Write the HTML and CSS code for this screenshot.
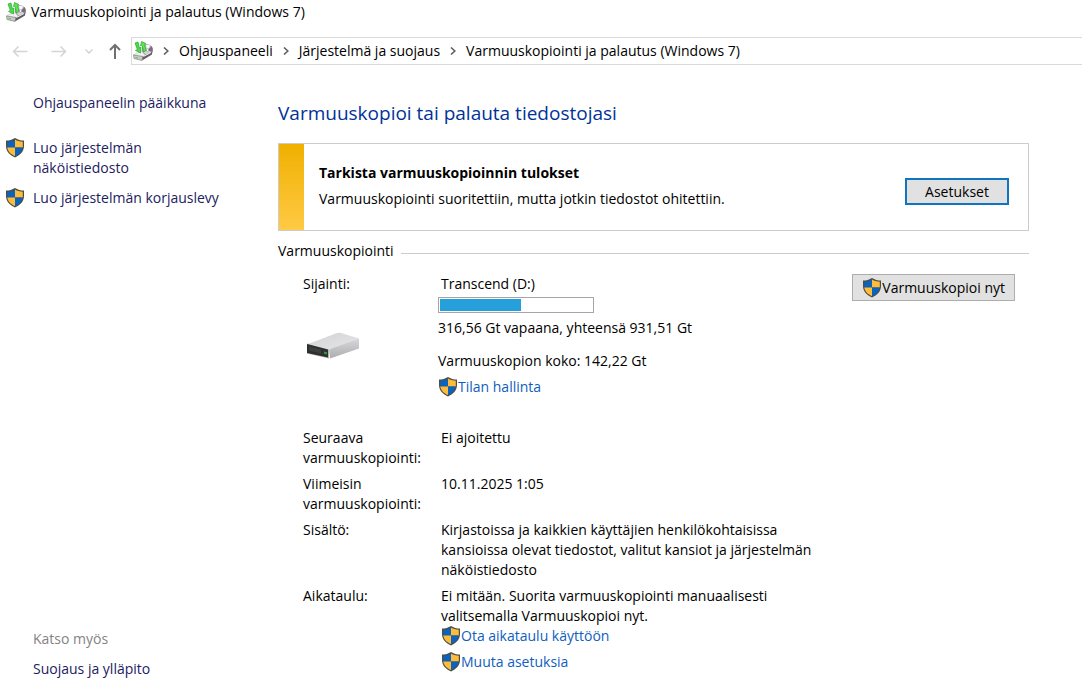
FILE: index.html
```html
<!DOCTYPE html>
<html lang="fi">

<head>
  <meta charset="UTF-8">
  <meta name="viewport" content="width=device-width, initial-scale=1.0">
  <title>Varmuuskopiointi ja palautus (Windows 7)</title>
  <link rel="stylesheet" href="styles.css">
</head>

<body>
  <!-- shared icons -->
  <svg class="defs" aria-hidden="true">
    <symbol id="shield" viewBox="0 0 20 20">
      <path d="M10 0C7.400 1.700 4.300 2.600 1 2.600V8C1 13.500 5 17.300 10 19.400C15 17.300 19 13.500 19 8V2.600C15.700 2.600 12.600 1.700 10 0Z" fill="#504c43" />
      <path d="M10 1.500V9.500H2.200V3.700C5.300 3.500 7.800 2.900 10 1.500Z" fill="#0b63bd" />
      <path d="M10 1.500V9.500H17.800V3.700C14.700 3.500 12.200 2.900 10 1.500Z" fill="#fdbd3b" />
      <path d="M10 9.500V18.100C6 16.300 2.800 13.600 2.300 9.500Z" fill="#fdbd3b" />
      <path d="M10 9.500V18.100C14 16.300 17.200 13.600 17.700 9.500Z" fill="#0b63bd" />
    </symbol>
    <symbol id="backup" viewBox="0 0 20 20">
      <path d="M.5 14L8 10L19 11L12 17Z" fill="#f0f0f0" stroke="#aaa" stroke-width=".5" />
      <ellipse cx="14.500" cy="9" rx="5" ry="5.500" transform="rotate(-25 14.500 9)" fill="#d5d0d8" stroke="#8d8790" stroke-width=".8" />
      <path d="M14.500 9L18.600 5Q20.500 8 18.500 11Z" fill="#806a83" />
      <path d="M14.500 9L13 4Q15.500 3 17 4.300Z" fill="#fafafa" />
      <circle cx="14.500" cy="9" r="1.300" fill="#fff" stroke="#777" stroke-width=".5" />
      <path d="M.5 14L10 15.500L9 19.500L1 17.500Z" fill="#c9c9c9" stroke="#777" stroke-width=".6" />
      <path d="M10 15.500L19 10.800V13.500L9 19.500Z" fill="#5f5f5f" />
      <path d="M10.500 15.500L18 11.500" stroke="#eee" stroke-width="1" />
      <path d="M2 2L5 1L6.500 7L8 6L7.500 12L2.500 9.500L4.300 8.500Z" fill="#49dc45" stroke="#1c9a22" stroke-width=".6" />
      <path d="M7.500 4.500L8.500 .5L13 2.500L11.700 3.500L13 9.500L10.500 11L9.200 4.800Z" fill="#5ae650" stroke="#1c9a22" stroke-width=".6" />
      <path d="M2.500 16.500L5 17" stroke="#45d82d" stroke-width="1" />
    </symbol>
    <symbol id="chevron" viewBox="0 0 6 8">
      <path d="M1 .5L4.800 4L1 7.500" fill="none" stroke="#606060" stroke-width="1.600" />
    </symbol>
  </svg>

  <header>
    <div class="titlebar">
      <svg class="app-icon"><use href="#backup" /></svg>
      <span>Varmuuskopiointi ja palautus (Windows 7)</span>
    </div>
    <div class="toolbar">
      <div class="nav-buttons">
        <button class="nav-button" aria-label="Takaisin" disabled>
          <svg width="16" height="14" viewBox="0 0 16 14"><path d="M15.500 7.500H1.500M6.500 2.500L1.500 7.500L6.500 12.500" /></svg>
        </button>
        <button class="nav-button" aria-label="Eteenpäin" disabled>
          <svg width="16" height="14" viewBox="0 0 16 14"><path d="M.5 7.500H14.500M9.500 2.500L14.500 7.500L9.500 12.500" /></svg>
        </button>
        <button class="nav-button recent" aria-label="Viimeisimmät sijainnit" disabled>
          <svg width="8" height="6" viewBox="0 0 8 6"><path d="M.5 1.500L4 5L7.500 1.500" /></svg>
        </button>
        <button class="nav-button up" aria-label="Ylös">
          <svg width="12" height="16" viewBox="0 0 12 16"><path d="M6 16V2M1 7L6 2L11 7" /></svg>
        </button>
      </div>
      <nav class="address">
        <svg class="app-icon"><use href="#backup" /></svg>
        <svg class="chevron"><use href="#chevron" /></svg>
        <a href="#">Ohjauspaneeli</a>
        <svg class="chevron"><use href="#chevron" /></svg>
        <a href="#">Järjestelmä ja suojaus</a>
        <svg class="chevron"><use href="#chevron" /></svg>
        <a href="#">Varmuuskopiointi ja palautus (Windows 7)</a>
      </nav>
    </div>
  </header>

  <div class="content">
    <aside class="sidebar">
      <a class="home" href="#">Ohjauspaneelin pääikkuna</a>
      <a class="task" href="#"><svg class="shield"><use href="#shield" /></svg><span>Luo järjestelmän näköistiedosto</span></a>
      <a class="task" href="#"><svg class="shield"><use href="#shield" /></svg><span>Luo järjestelmän korjauslevy</span></a>
      <div class="see-also">
        <p>Katso myös</p>
        <a href="#">Suojaus ja ylläpito</a>
      </div>
    </aside>

    <main>
      <h1>Varmuuskopioi tai palauta tiedostojasi</h1>

      <section class="notice">
        <div class="notice-text">
          <h2>Tarkista varmuuskopioinnin tulokset</h2>
          <p>Varmuuskopiointi suoritettiin, mutta jotkin tiedostot ohitettiin.</p>
        </div>
        <button class="button default">Asetukset</button>
      </section>

      <h2 class="group-title">Varmuuskopiointi</h2>

      <div class="backup">
        <dl class="details">
          <dt class="location">
            Sijainti:
            <svg class="drive" viewBox="0 0 54 28">
              <defs>
                <linearGradient id="driveTop" x1="0" y1="0" x2="1" y2="1">
                  <stop offset="0" stop-color="#d2d2d2" />
                  <stop offset="1" stop-color="#e7e7ea" />
                </linearGradient>
                <linearGradient id="driveSide" x1="0" y1="0" x2="0" y2="1">
                  <stop offset="0" stop-color="#d8d8dc" />
                  <stop offset="1" stop-color="#adadaf" />
                </linearGradient>
              </defs>
              <path d="M1 12L30 1Q32 .5 34 1L52 6.500L24 18Z" fill="url(#driveTop)" />
              <path d="M22 17.500L52 6.500V16.500L23 26.500Z" fill="url(#driveSide)" />
              <path d="M0 11.500L22 17.500V26.500L0 21.500Z" fill="#b5b5b5" />
              <path d="M0 12L21 17.500V25.500L0 21Z" fill="#2c302f" />
              <path d="M2 14.500L14 17.500V21.500L2 18.500Z" fill="#3c403e" />
              <path d="M17 19.500L20 20.300V22.500L17 21.700Z" fill="#2f9a3e" />
            </svg>
          </dt>
          <dd>
            <label class="indent" for="space">Transcend (D:)</label>
            <progress id="space" value="53" max="100"></progress>
            <p>316,56 Gt vapaana, yhteensä 931,51 Gt</p>
            <p class="size">Varmuuskopion koko: 142,22 Gt</p>
            <a class="action" href="#"><svg class="shield"><use href="#shield" /></svg>Tilan hallinta</a>
          </dd>
          <dt class="next">Seuraava varmuuskopiointi:</dt>
          <dd class="indent next">Ei ajoitettu</dd>
          <dt>Viimeisin varmuuskopiointi:</dt>
          <dd class="indent">10.11.2025 1:05</dd>
          <dt>Sisältö:</dt>
          <dd class="indent">Kirjastoissa ja kaikkien käyttäjien henkilökohtaisissa kansioissa olevat tiedostot, valitut kansiot ja järjestelmän näköistiedosto</dd>
          <dt>Aikataulu:</dt>
          <dd class="indent">
            <p>Ei mitään. Suorita varmuuskopiointi manuaalisesti valitsemalla Varmuuskopioi nyt.</p>
            <div class="actions">
              <a class="action" href="#"><svg class="shield"><use href="#shield" /></svg>Ota aikataulu käyttöön</a>
              <a class="action" href="#"><svg class="shield"><use href="#shield" /></svg>Muuta asetuksia</a>
            </div>
          </dd>
        </dl>
        <button class="button"><svg class="shield"><use href="#shield" /></svg>Varmuuskopioi nyt</button>
      </div>
    </main>
  </div>
</body>

</html>
```
FILE: styles.css
```css
* {
  box-sizing: border-box;
}

body {
  margin: 0;
  min-height: 100vh;
  display: flex;
  flex-direction: column;
  background-color: #fff;
  color: #000;
  font-family: "Segoe UI", "Open Sans", "Noto Sans", sans-serif;
  font-size: 14px;
  line-height: 20px;
}

h1, h2, p, dl, dd {
  margin: 0;
}

a {
  color: #1b2160;
  text-decoration: none;
}

a:hover {
  text-decoration: underline;
}

button {
  font: inherit;
  color: inherit;
}

svg {
  flex: none;
}

.defs {
  position: absolute;
  width: 0;
  height: 0;
}

.app-icon {
  width: 20px;
  height: 20px;
}

.shield {
  width: 20px;
  height: 20px;
}

.chevron {
  width: 6px;
  height: 8px;
}

/* window title and address bar */
.titlebar {
  display: flex;
  align-items: center;
  gap: 5px;
  height: 24px;
  padding-left: 6px;
}

.toolbar {
  display: flex;
  margin-top: 13px;
}

.nav-buttons {
  display: flex;
  align-items: center;
  gap: 23px;
  width: 131px;
  padding-left: 12px;
}

.nav-button {
  display: flex;
  padding: 0;
  border: none;
  background: none;
}

.nav-button path {
  fill: none;
  stroke: #d4d4d4;
  stroke-width: 1.5;
}

.nav-button.recent {
  margin: 0 -7px 0 -5px;
}

.nav-button.up path {
  stroke: #707070;
  stroke-width: 2;
}

.address {
  flex: 1;
  display: flex;
  align-items: center;
  gap: 10px;
  height: 28px;
  padding-left: 1px;
  border: 1px solid #d9d9d9;
  border-right: none;
}

.address a {
  color: #000;
}

/* task pane */
.content {
  flex: 1;
  display: flex;
}

.sidebar {
  display: flex;
  flex-direction: column;
  gap: 10px;
  width: 278px;
  padding: 28px 54px 2px 5px;
}

.home {
  margin: 0 0 15px 28px;
}

.task {
  display: flex;
  gap: 8px;
}

.see-also {
  display: flex;
  flex-direction: column;
  gap: 10px;
  margin-top: auto;
  padding-left: 28px;
}

.see-also p {
  color: #838383;
}

/* main area */
main {
  flex: 1;
  padding: 34px 53px 8px 0;
}

h1 {
  color: #003399;
  font-size: 19px;
  font-weight: normal;
  line-height: 28px;
}

.notice {
  display: flex;
  align-items: flex-start;
  justify-content: space-between;
  margin-top: 16px;
  padding-right: 19px;
  border: 1px solid #ccc;
}

.notice::before {
  content: "";
  align-self: stretch;
  width: 25px;
  background: linear-gradient(#f0b000, #ffca45);
}

.notice-text {
  flex: 1;
  padding: 19px 15px 21px;
}

.notice h2 {
  font-size: 14px;
  line-height: 20px;
}

.notice p {
  margin-top: 6px;
}

.button {
  display: flex;
  align-items: center;
  justify-content: center;
  height: 27px;
  padding: 0 9px;
  border: 1px solid #adadad;
  background-color: #e1e1e1;
}

.button.default {
  min-width: 104px;
  margin-top: 34px;
  border: 2px solid #0f75bf;
}

.group-title {
  display: flex;
  align-items: center;
  gap: 7px;
  margin-top: 10px;
  font-size: 14px;
  font-weight: normal;
}

.group-title::after {
  content: "";
  flex: 1;
  margin-top: 4px;
  border-top: 1px solid #ccc;
}

.backup {
  display: flex;
  align-items: flex-start;
  justify-content: space-between;
  margin-top: 13px;
  padding: 0 14px 0 25px;
}

.details {
  display: grid;
  grid-template-columns: 135px 400px;
  row-gap: 6px;
}

.indent {
  padding-left: 3px;
}

.location {
  display: flex;
  flex-direction: column;
}

.drive {
  width: 54px;
  height: 28px;
  margin: 38px 0 0 4px;
}

label {
  display: block;
}

progress {
  display: block;
  appearance: none;
  width: 156px;
  height: 16px;
  margin: 3px 0 5px;
  padding: 1px;
  border: 1px solid #a5a5a5;
  background-color: #fff;
}

progress::-webkit-progress-bar {
  background-color: #fff;
}

progress::-webkit-progress-value {
  background-color: #26a0da;
}

.size {
  margin: 13px 0 6px;
}

.next {
  margin-top: 25px;
}

.action {
  display: flex;
  align-items: center;
  color: #0f60bd;
}

.actions {
  display: flex;
  flex-direction: column;
  gap: 6px;
}
```
